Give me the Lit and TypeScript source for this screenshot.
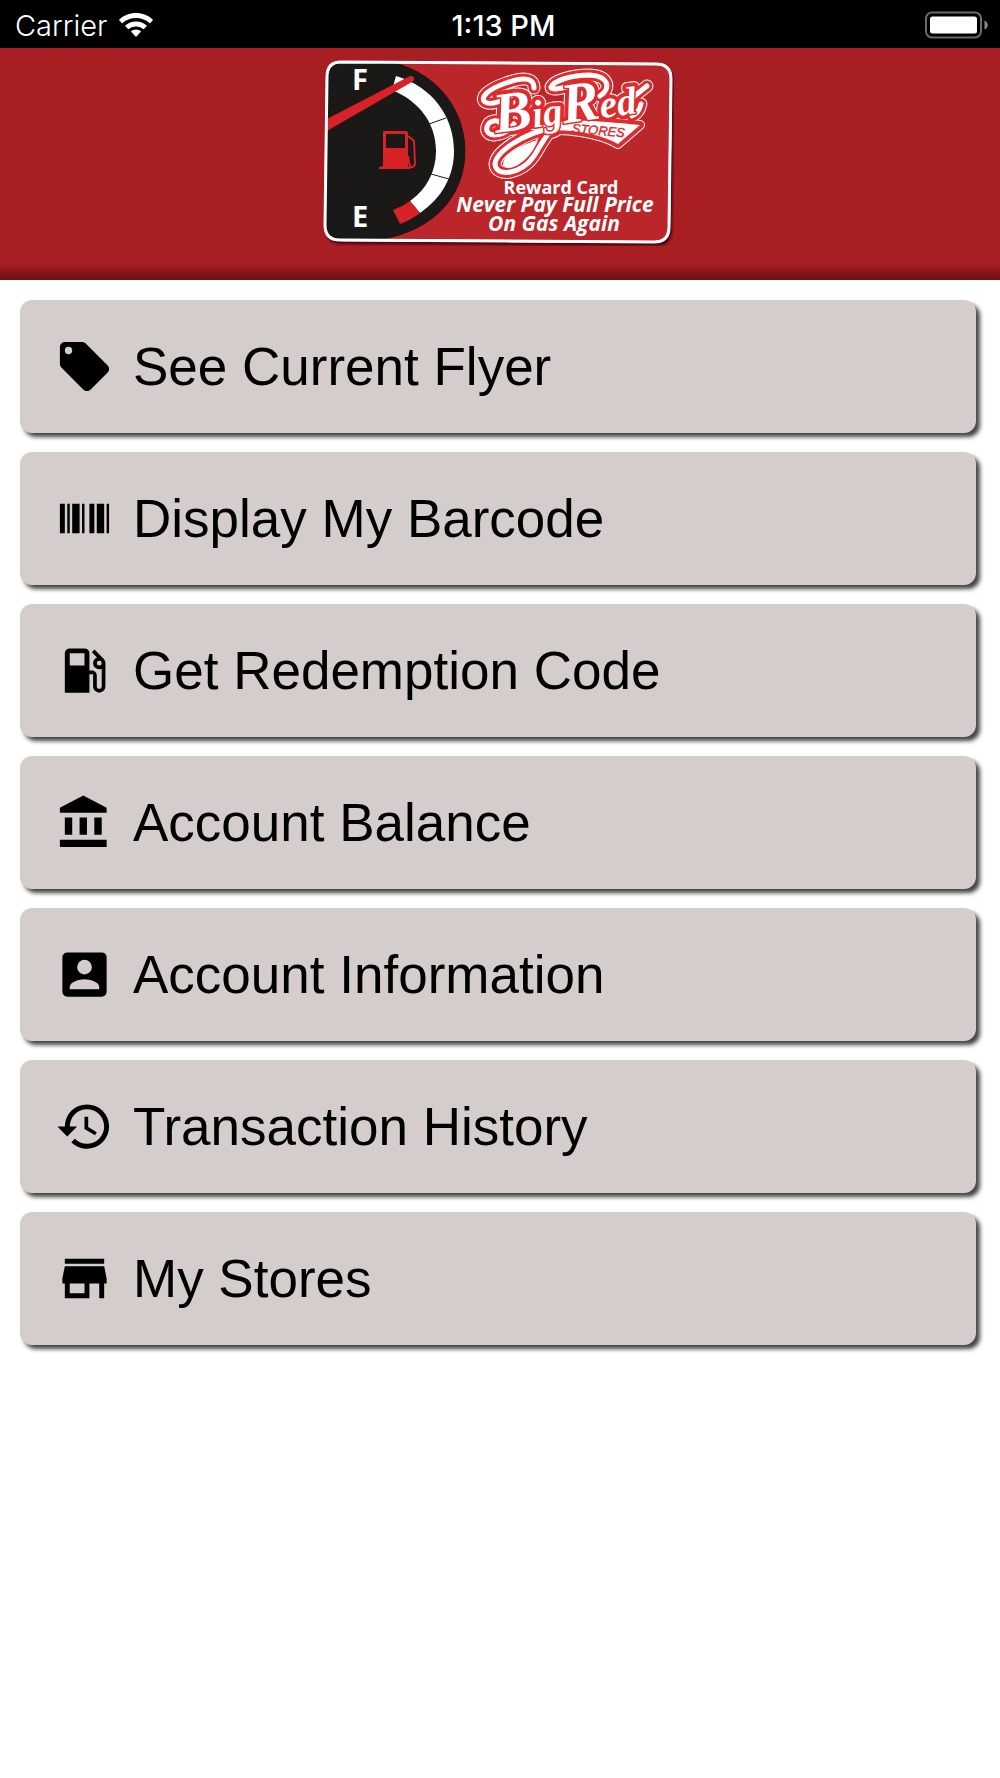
import { LitElement, html, css, svg } from "lit";
import { customElement } from "lit/decorators.js";

interface MenuItem {
  label: string;
  icon: string;
}

const MENU: MenuItem[] = [
  {
    label: "See Current Flyer",
    icon: "M5.5,7A1.5,1.5 0 0,1 4,5.5A1.5,1.5 0 0,1 5.5,4A1.5,1.5 0 0,1 7,5.5A1.5,1.5 0 0,1 5.5,7M21.41,11.58L12.41,2.58C12.05,2.22 11.55,2 11,2H4C2.89,2 2,2.89 2,4V11C2,11.55 2.22,12.05 2.59,12.41L11.58,21.41C11.95,21.77 12.45,22 13,22C13.55,22 14.05,21.77 14.41,21.41L21.41,14.41C21.78,14.05 22,13.55 22,13C22,12.44 21.77,11.94 21.41,11.58Z",
  },
  {
    label: "Display My Barcode",
    icon: "M2,6H4V18H2V6M5,6H6V18H5V6M7,6H10V18H7V6M11,6H12V18H11V6M14,6H16V18H14V6M17,6H20V18H17V6M21,6H22V18H21V6Z",
  },
  {
    label: "Get Redemption Code",
    icon: "M18,10A1,1 0 0,1 17,9A1,1 0 0,1 18,8A1,1 0 0,1 19,9A1,1 0 0,1 18,10M12,10H6V5H12M19.77,7.23L19.78,7.22L16.06,3.5L15,4.56L17.11,6.67C16.17,7 15.5,7.93 15.5,9A2.5,2.5 0 0,0 18,11.5C18.36,11.5 18.69,11.42 19,11.29V18.5A1,1 0 0,1 18,19.5A1,1 0 0,1 17,18.5V14A2,2 0 0,0 15,12H14V5A2,2 0 0,0 12,3H6C4.89,3 4,3.89 4,5V21H14V13.5H15.5V18.5A2.5,2.5 0 0,0 18,21A2.5,2.5 0 0,0 20.5,18.5V9C20.5,8.31 20.22,7.68 19.77,7.23Z",
  },
  {
    label: "Account Balance",
    icon: "M11.5,1L2,6V8H21V6M16,10V17H19V10M2,22H21V19H2M10,10V17H13V10M4,10V17H7V10H4Z",
  },
  {
    label: "Account Information",
    icon: "M6,17C6,15 10,13.9 12,13.9C14,13.9 18,15 18,17V18H6M15,9A3,3 0 0,1 12,12A3,3 0 0,1 9,9A3,3 0 0,1 12,6A3,3 0 0,1 15,9M3,5V19A2,2 0 0,0 5,21H19A2,2 0 0,0 21,19V5A2,2 0 0,0 19,3H5C3.89,3 3,3.9 3,5Z",
  },
  {
    label: "Transaction History",
    icon: "M13.5,8H12V13L16.28,15.54L17,14.33L13.5,12.25V8M13,3A9,9 0 0,0 4,12H1L4.96,16.03L9,12H6A7,7 0 0,1 13,5A7,7 0 0,1 20,12A7,7 0 0,1 13,19C11.07,19 9.32,18.21 8.06,16.94L6.64,18.36C8.27,20 10.5,21 13,21A9,9 0 0,0 22,12A9,9 0 0,0 13,3",
  },
  {
    label: "My Stores",
    icon: "M12,18H6V14H12M21,14V12L20,7H4L3,12V14H4V20H14V14H18V20H20V14M20,4H4V6H20V4Z",
  },
];

@customElement("status-bar")
export class StatusBar extends LitElement {
  static styles = css`
    :host {
      display: grid;
      grid-template-columns: 1fr auto 1fr;
      align-items: center;
      height: 48px;
      padding: 0 12px 0 15px;
      background: #000;
      color: #fff;
      font-family: Inter, "Liberation Sans", sans-serif;
      font-size: 29px;
      line-height: 48px;
    }
    .carrier {
      display: flex;
      align-items: center;
      gap: 12px;
    }
    .carrier-name,
    .time {
      padding-top: 2px;
    }
    .carrier-name {
      font-weight: 300;
    }
    .time {
      padding-left: 4px;
      font-weight: 500;
    }
    .battery {
      justify-self: end;
    }
    svg {
      display: block;
    }
  `;

  render() {
    return html`
      <div class="carrier">
        <span class="carrier-name">Carrier</span>
        <svg width="34" height="24" viewBox="0 0 34 24" fill="#fff" aria-hidden="true">
          <path d="M17 0C23.6 0 29.400 2.400 34 6.700L31 10.400C27.200 6.900 22.400 5 17 5S6.800 6.900 3 10.400L0 6.700C4.600 2.400 10.400 0 17 0Z" />
          <path d="M17 8.500C21.200 8.500 25 10 28 12.700L24.700 16.300C22.600 14.400 20 13.400 17 13.400S11.400 14.400 9.300 16.300L6 12.700C9 10 12.800 8.500 17 8.500Z" />
          <path d="M17 16.600C19 16.600 20.700 17.300 22 18.500L17 24L12 18.500C13.300 17.300 15 16.600 17 16.600Z" />
        </svg>
      </div>
      <span class="time">1:13 PM</span>
      <svg class="battery" width="63" height="28" viewBox="0 0 63 28" aria-hidden="true">
        <rect x="1" y="1.500" width="55" height="25" rx="6" fill="none" stroke="#6b6b6b" stroke-width="2" />
        <rect x="5" y="5.500" width="47" height="17" rx="2.500" fill="#fff" />
        <path d="M59.500 9.500C61.500 10.500 62.700 12 62.700 14S61.500 17.500 59.500 18.500Z" fill="#8a8a8a" />
      </svg>
    `;
  }
}

/** Strokes and lettering of the store emblem; drawn in layers of decreasing width. */
const emblem = (layer: string) => svg`
  <g class=${layer}>
    <path class="swash" d="M534 88C534 76 520 78 506 83C486 90 480 98 485 102C491 106 504 100 514 94" />
    <path class="swash" d="M514 124C504 138 484 138 487 127C489 120 498 119 501 124" />
    <path class="swash" d="M600 96C612 88 608 76 590 75C570 75 554 81 551 87C551 91 562 88 572 86" />
    <path class="swash" d="M632 116C638 114 640 108 641 104M632 98L647 86" />
    <path class="swash" d="M552 128C522 134 496 152 495 164C496 178 522 174 534 156C541 145 545 136 554 127" />
    <path class="banner" d="M530 130C554 117 590 120 640 125L618 144C600 133 566 128 541 131Z" />
    <text class="script" x="496" y="133" transform="rotate(-8 496 133)"><tspan class="cap">B</tspan>ig<tspan class="cap">R</tspan>ed</text>
  </g>
`;

@customElement("reward-card")
export class RewardCard extends LitElement {
  static styles = css`
    :host {
      display: block;
      width: 352px;
    }
    svg {
      display: block;
      width: 100%;
      height: auto;
    }
    text {
      fill: #fff;
      font-family: "Noto Sans", "Open Sans", sans-serif;
      font-weight: 700;
      text-anchor: middle;
    }
    .level {
      font-size: 29px;
    }
    .title,
    .slogan {
      font-family: "Open Sans", "Noto Sans", sans-serif;
    }
    .title {
      font-size: 18px;
    }
    .slogan {
      font-size: 21px;
      font-style: italic;
    }
    .script {
      font-family: "Liberation Serif", serif;
      font-size: 39px;
      font-style: italic;
      text-anchor: start;
    }
    .cap {
      font-size: 57px;
    }
    .swash {
      fill: none;
    }
    .outline,
    .ring,
    .face {
      stroke-linejoin: round;
      stroke-linecap: round;
    }
    .outline > * {
      stroke: #fff;
      stroke-width: 10px;
    }
    .outline > .swash {
      stroke-width: 13px;
    }
    .ring > * {
      stroke: #de2b2d;
      stroke-width: 8px;
    }
    .ring > .swash {
      stroke-width: 11px;
    }
    .face > .swash {
      stroke: #fff;
      stroke-width: 5px;
    }
    .face > .banner {
      fill: #fff;
    }
    .face > .script {
      paint-order: stroke;
      stroke: #de2b2d;
      stroke-width: 3px;
    }
    .stores {
      fill: #d8282c;
      stroke: #d8282c;
      stroke-width: 0.4px;
      font-family: "Liberation Sans", sans-serif;
      font-size: 13px;
      font-style: italic;
      font-weight: 400;
    }
  `;

  render() {
    return html`
      <svg viewBox="322 58 352 188" role="img" aria-label="Big Red Stores Reward Card">
        <defs>
          <clipPath id="card">
            <path d="M341 62L656 64Q671 64 671 79L669 227Q669 242 654 242L340 240Q325 240 325 225L327 77Q327 62 341 62Z" />
          </clipPath>
          <filter id="lift" x="-5%" y="-5%" width="110%" height="112%">
            <feDropShadow dx="2" dy="3" stdDeviation="1.500" flood-color="#3a0508" flood-opacity=".9" />
          </filter>
        </defs>
        <path filter="url(#lift)" fill="#ba252b" stroke="#fff" stroke-width="2" d="M341 62L656 64Q671 64 671 79L669 227Q669 242 654 242L340 240Q325 240 325 225L327 77Q327 62 341 62Z" />
        <g clip-path="url(#card)">
          <path fill="#1b1918" stroke="#d91f28" stroke-width="1" d="M320 60H385C434 68 466 107 466 151C466 196 434 231 383 240H320Z" />
          <path fill="#fff" d="M396 76C433 87 454 117 454 151C454 176 442 198 420 213L410 201C427 189 436 171 436 151C436 123 419 101 392 90Z" />
          <path fill="#d92228" d="M410 201L420 213Q411 220 400 224L393 210Q402 207 410 201Z" />
          <path stroke="#1b1918" stroke-width="1" d="M429 124L446 118M431 174L449 179" />
          <path fill="#d92228" d="M325 120L410 76Q415 76 414 80L412 82L325 132Z" />
          <path fill="#d92228" d="M383 132Q383 131 385 131H406Q408 131 408 133V167H410V169H379V167L383 166Z" />
          <path fill="#1b1918" d="M386 134H405V148H386Z" />
          <path fill="none" stroke="#d92228" stroke-width="2" d="M408 136L414 141L415 164Q414 168 410 167L408 156" />
        </g>
        <path fill="none" stroke="#fff" stroke-width="3" d="M341 62L656 64Q671 64 671 79L669 227Q669 242 654 242L340 240Q325 240 325 225L327 77Q327 62 341 62Z" />
        <text class="level" x="360" y="90">F</text>
        <text class="level" x="360" y="227">E</text>
        ${emblem("outline")}
        ${emblem("ring")}
        ${emblem("face")}
        <path fill="#fff" d="M503 164C503 155 520 145 538 140C532 156 518 168 508 168Q503 168 503 164Z" />
        <text class="stores" x="598" y="135" transform="rotate(5 598 135)">STORES</text>
        <text class="title" x="561" y="194">Reward Card</text>
        <text class="slogan" x="555" y="212">Never Pay Full Price</text>
        <text class="slogan" x="554" y="231">On Gas Again</text>
      </svg>
    `;
  }
}

@customElement("app-root")
export class AppRoot extends LitElement {
  static styles = css`
    :host {
      display: block;
      min-height: 100vh;
      background: #fff;
      color: #000;
      font-family: "Liberation Sans", Arial, sans-serif;
    }
    .banner {
      display: flex;
      flex-direction: column;
      align-items: center;
      gap: 15px;
      padding-top: 10px;
      background: #a91e23;
    }
    .card {
      margin-right: 4px;
    }
    .edge {
      align-self: stretch;
      height: 19px;
      background: linear-gradient(#b02126, #6d1013);
    }
    .menu {
      display: flex;
      flex-direction: column;
      gap: 19px;
      margin: 0;
      padding: 20px 24px 20px 20px;
      list-style: none;
    }
    .entry {
      display: flex;
      align-items: center;
      gap: 19px;
      width: 100%;
      height: 133px;
      padding: 0 35px;
      border: 0;
      border-radius: 12px;
      background: #d5cccc;
      box-shadow: 4px 4px 4px #444;
      color: inherit;
      font-family: inherit;
      font-size: 53px;
      line-height: 60px;
      text-align: left;
      cursor: pointer;
    }
    .icon {
      flex: none;
      width: 59px;
      height: 59px;
      fill: #000;
    }
  `;

  render() {
    return html`
      <status-bar></status-bar>
      <header class="banner">
        <reward-card class="card"></reward-card>
        <div class="edge"></div>
      </header>
      <nav aria-label="Main menu">
        <ul class="menu">
          ${MENU.map(
            (item) => html`
              <li>
                <button class="entry" type="button">
                  <svg class="icon" viewBox="0 0 24 24" aria-hidden="true">
                    <path fill-rule="evenodd" d=${item.icon} />
                  </svg>
                  <span>${item.label}</span>
                </button>
              </li>
            `
          )}
        </ul>
      </nav>
    `;
  }
}
